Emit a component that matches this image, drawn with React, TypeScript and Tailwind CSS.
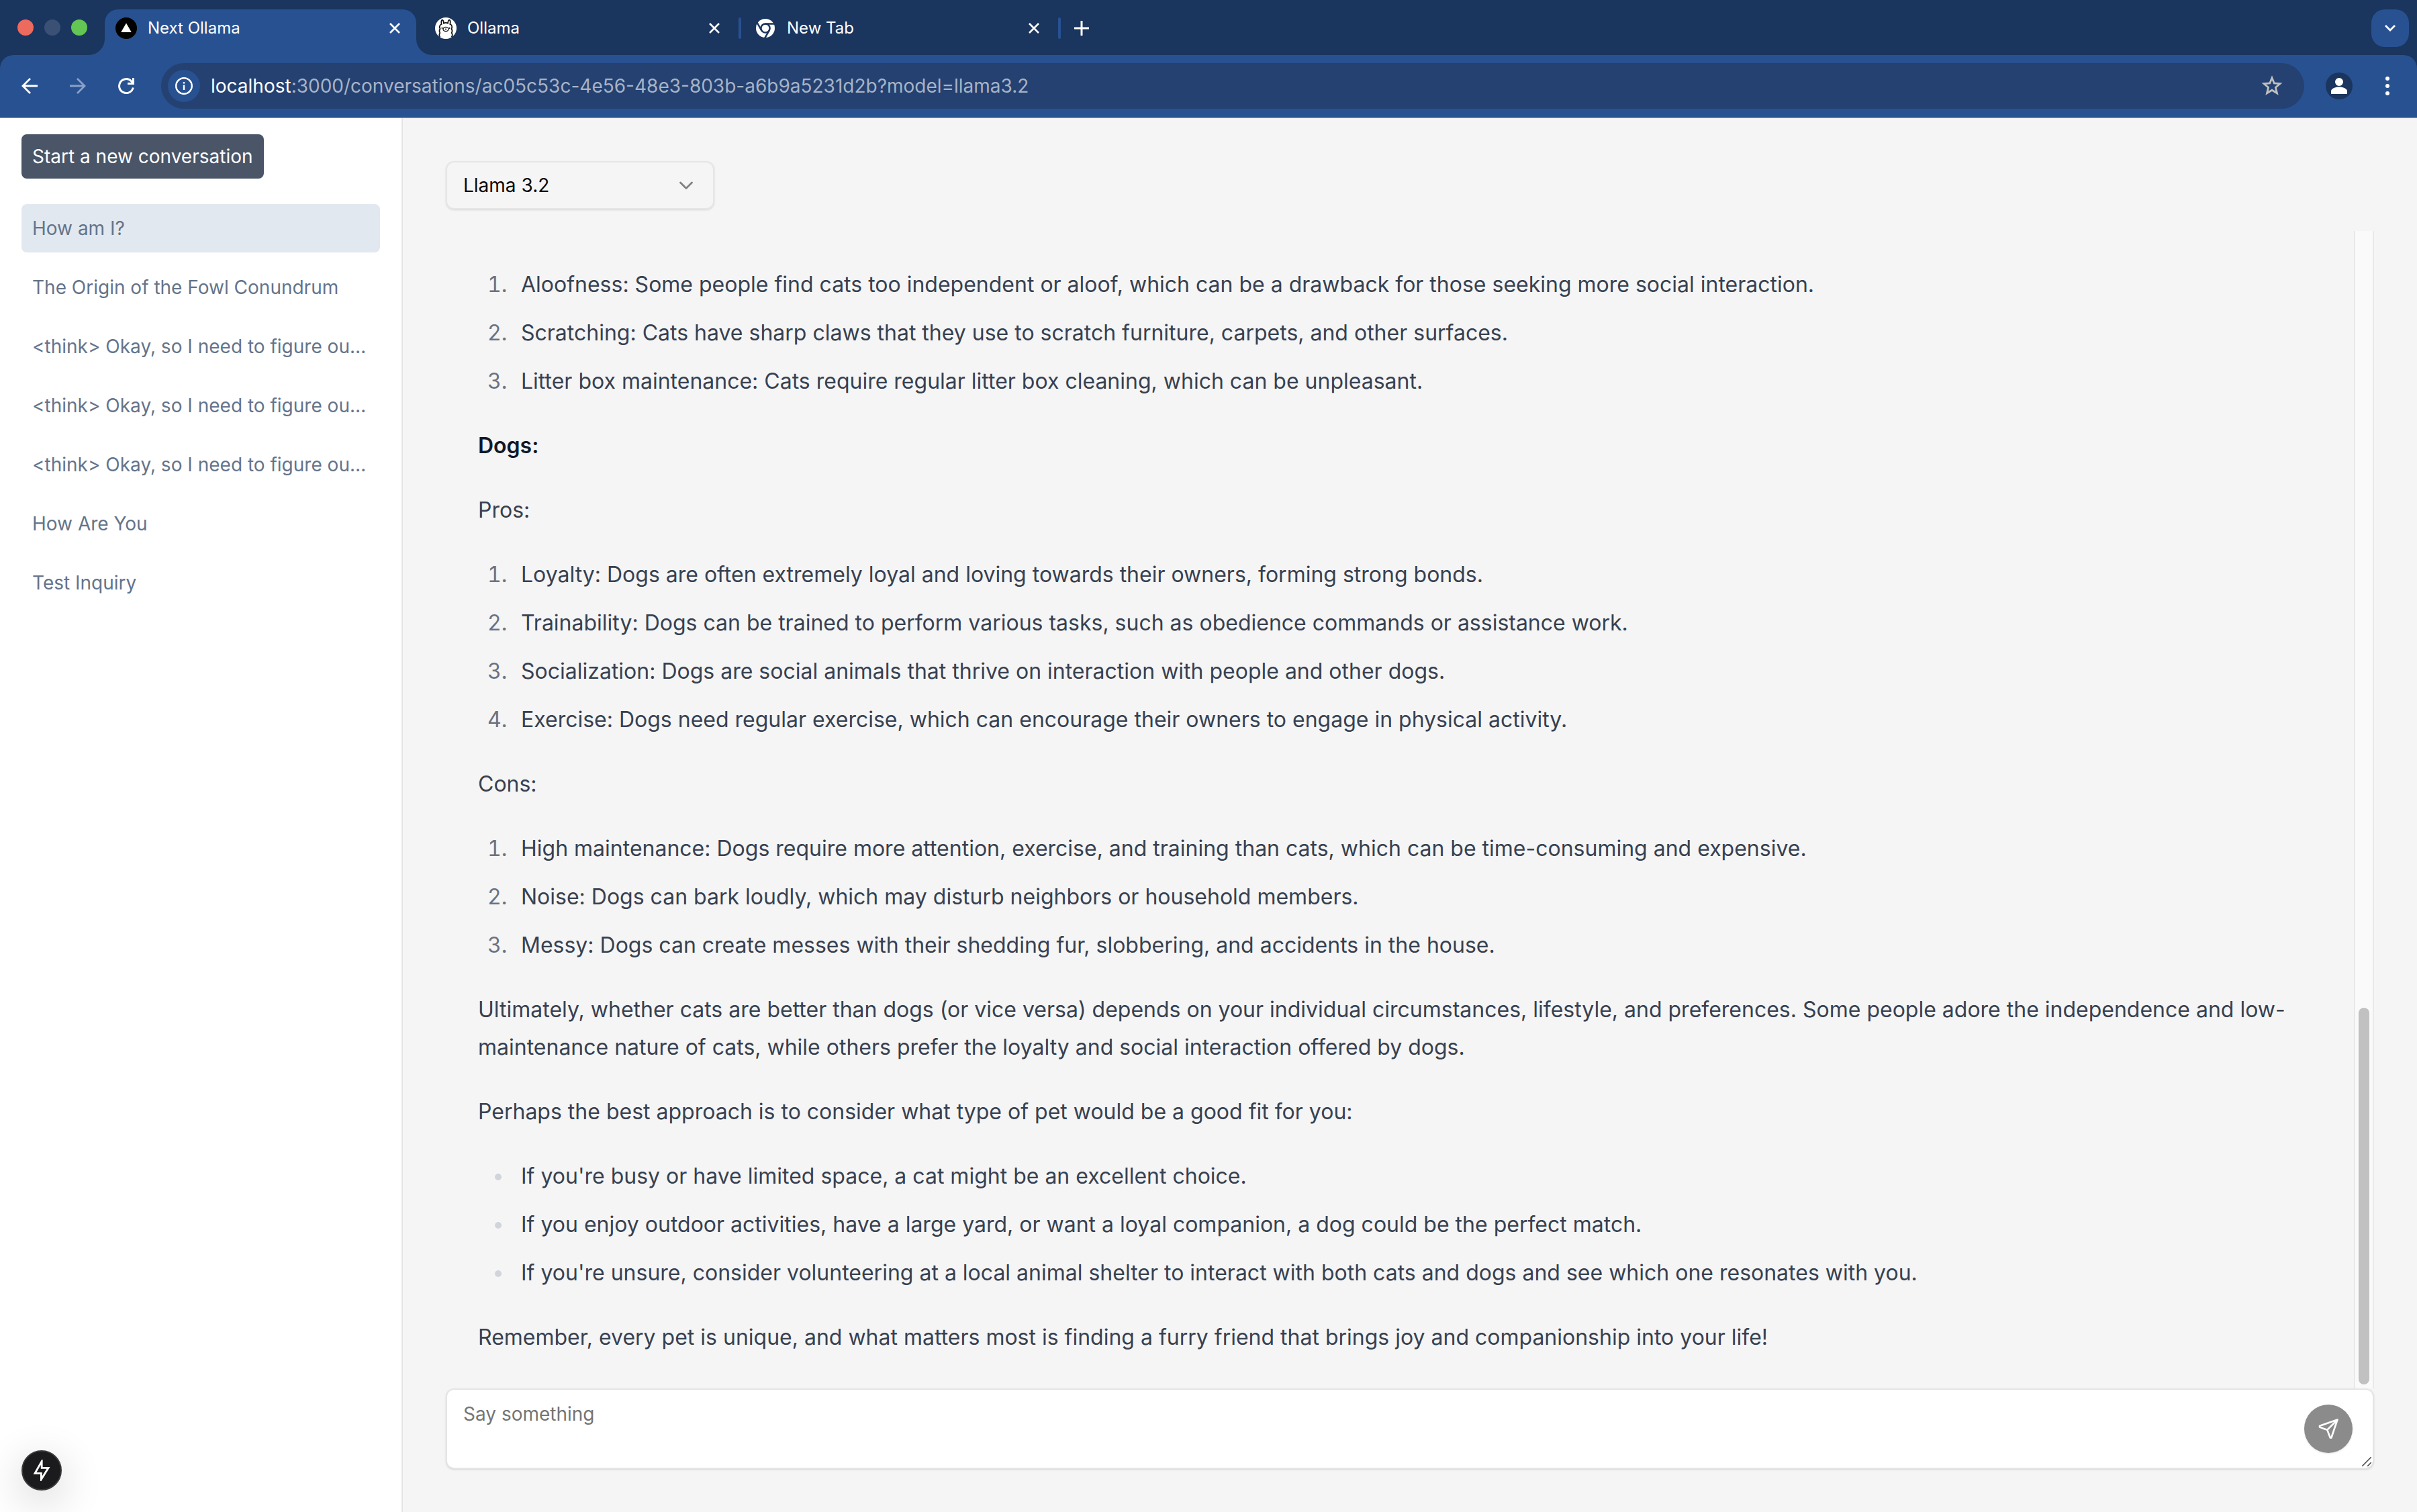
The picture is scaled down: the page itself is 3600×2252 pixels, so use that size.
import React from "react";

const conversations = [
  "How am I?",
  "The Origin of the Fowl Conundrum",
  "<think> Okay, so I need to figure ou…",
  "<think> Okay, so I need to figure ou…",
  "<think> Okay, so I need to figure ou…",
  "How Are You",
  "Test Inquiry",
];

function CloseIcon() {
  return (
    <svg viewBox="0 0 16 16" className="size-4" stroke="#fff" strokeWidth="2.6" fill="none">
      <path d="M1 1l14 14M15 1L1 15" />
    </svg>
  );
}

function OllamaIcon() {
  return (
    <svg viewBox="0 0 32 32" className="size-8" fill="none" stroke="#111" strokeWidth="1.7">
      <circle cx="16" cy="16" r="16" fill="#fff" stroke="none" />
      <path d="M7.500 29C5.700 27 6.300 24.500 7.300 23C6.100 20.500 6.300 18.500 7.500 17C5.900 14 6.900 11 9.700 10C8.800 7 9.300 3.800 10.800 3.600C12.400 3.800 12.700 6.200 13 8.700C14.800 7.600 17.200 7.600 19 8.700C19.300 6.200 19.600 3.800 21.200 3.600C22.700 3.800 23.200 7 22.300 10C25.100 11 26.100 14 24.500 17C25.700 18.500 25.900 20.500 24.700 23C25.700 24.500 26.300 27 24.500 29" />
      <ellipse cx="16" cy="17.500" rx="4" ry="3.100" strokeWidth="1.300" />
      <circle cx="10.500" cy="15.800" r="1.100" fill="#111" stroke="none" />
      <circle cx="21.500" cy="15.800" r="1.100" fill="#111" stroke="none" />
      <path d="M15 16.800l1 .7 1-.7M16 17.500v1.200" strokeWidth="1" />
    </svg>
  );
}

function ChromeIcon() {
  return (
    <svg viewBox="0 0 28 28" className="mx-0.5 size-7">
      <circle cx="14" cy="14" r="14" fill="#fff" />
      <g fill="none" stroke="#1a355e" strokeWidth="2.500">
        <circle cx="14" cy="14" r="6.600" />
        <path d="M14 7.400H27.500M8.300 17.300L1.500 5.500M19.700 17.300L13 29" />
      </g>
    </svg>
  );
}

function ActiveTab({ title, icon }: { title: string; icon: React.ReactNode }) {
  return (
    <div className="relative flex h-[68px] w-[464px] items-center rounded-t-[20px] bg-[#285192] pr-6 pl-4">
      <svg viewBox="0 0 24 24" className="absolute bottom-0 -left-6 size-6">
        <path d="M24 0V24H0A24 24 0 0 0 24 0Z" fill="#285192" />
      </svg>
      <svg viewBox="0 0 24 24" className="absolute -right-6 bottom-0 size-6">
        <path d="M0 0V24H24A24 24 0 0 1 0 0Z" fill="#285192" />
      </svg>
      <TabContent title={title} icon={icon} />
    </div>
  );
}

function TabContent({ title, icon }: { title: string; icon: React.ReactNode }) {
  return (
    <div className="-mt-3 flex flex-1 items-center">
      {icon}
      <span className="ml-4 flex-1 text-[24px] leading-8 text-white">{title}</span>
      <button aria-label={`Close ${title}`}>
        <CloseIcon />
      </button>
    </div>
  );
}

function Separator() {
  return <div className="-mt-3 h-8 w-1 shrink-0 rounded-full bg-[#285192]" />;
}

function Browser() {
  return (
    <header className="shrink-0 bg-[#1a355e]">
      <div className="flex h-[82px] items-end pr-3">
        <div className="flex h-[82px] w-[156px] shrink-0 items-center gap-4 pl-[26px]">
          <span className="size-6 rounded-full bg-[#ed6a5e]" />
          <span className="size-6 rounded-full bg-[#3a5075]" />
          <span className="size-6 rounded-full bg-[#62c554]" />
        </div>
        <ActiveTab
          title="Next Ollama"
          icon={
            <svg viewBox="0 0 32 32" className="size-8">
              <circle cx="16" cy="16" r="16" fill="#000" />
              <path d="M16 8.500l7.800 13.500H8.200Z" fill="#fff" />
            </svg>
          }
        />
        <div className="flex h-[68px] w-[480px] items-center px-7">
          <TabContent title="Ollama" icon={<OllamaIcon />} />
        </div>
        <div className="flex h-[68px] items-center">
          <Separator />
        </div>
        <div className="flex h-[68px] w-[472px] items-center pr-7 pl-5">
          <TabContent title="New Tab" icon={<ChromeIcon />} />
        </div>
        <div className="flex h-[68px] items-center">
          <Separator />
          <button aria-label="New tab" className="-mt-3 ml-5">
            <svg viewBox="0 0 22 22" className="size-[22px]" stroke="#fff" strokeWidth="3">
              <path d="M11 0V22M0 11H22" />
            </svg>
          </button>
        </div>
        <button aria-label="Search tabs" className="mb-3 ml-auto flex size-14 items-center justify-center rounded-[20px] bg-[#285192]">
          <svg viewBox="0 0 16 10" className="h-2.5 w-4" fill="none" stroke="#fff" strokeWidth="2.800">
            <path d="M1 1l7 7 7-7" />
          </svg>
        </button>
      </div>
      <div className="flex h-[94px] items-center rounded-t-[20px] border-b-2 border-[#5079b3] bg-[#285192] pl-8">
        <button aria-label="Back" className="mr-12">
          <svg viewBox="0 0 24 24" className="size-6" fill="none" stroke="#fff" strokeWidth="2.800">
            <path d="M24 12H2M13 1L2 12l11 11" />
          </svg>
        </button>
        <button aria-label="Forward" className="mr-12">
          <svg viewBox="0 0 24 24" className="size-6" fill="none" stroke="#8aa0c8" strokeWidth="2.800">
            <path d="M0 12H22M11 1l11 11-11 11" />
          </svg>
        </button>
        <button aria-label="Reload" className="mr-10">
          <svg viewBox="0 0 24 24" className="size-6" fill="none" stroke="#fff" strokeWidth="3">
            <path d="M22.300 14.500A10.500 10.500 0 1 1 19.500 4.700L22 7.500" />
            <path d="M22.500 0V8.600H14" />
          </svg>
        </button>
        <div className="flex h-[68px] flex-1 items-center rounded-full bg-[#244171] pr-8 pl-2.5">
          <button aria-label="Site information" className="flex size-12 items-center justify-center rounded-full bg-[#285192]">
            <svg viewBox="0 0 26 26" className="size-[26px]" fill="none" stroke="#fff" strokeWidth="2.400">
              <circle cx="13" cy="13" r="11.800" />
              <path d="M13 11.500V19M13 7V9.500" />
            </svg>
          </button>
          <a href="#" className="ml-4 flex-1 text-[28px] leading-10 text-[#a7b3c6]">
            <span className="text-white">localhost</span>
            :3000/conversations/ac05c53c-4e56-48e3-803b-a6b9a5231d2b?model=llama3.2
          </a>
          <button aria-label="Bookmark this page">
            <svg viewBox="0 0 32 32" className="size-8" fill="none" stroke="#c0c0c0" strokeWidth="2.800">
              <path d="M16 4l3.300 8 8.700.7-6.600 5.600 2.100 8.400L16 22.200l-7.500 4.500 2.100-8.400L4 12.700l8.700-.7Z" />
            </svg>
          </button>
        </div>
        <button aria-label="Profile" className="ml-8">
          <svg viewBox="0 0 40 40" className="size-10">
            <circle cx="20" cy="20" r="20" fill="#1a355e" />
            <circle cx="20" cy="14" r="6" fill="#fff" />
            <path d="M8 32V28C8 24 14 21.500 20 21.500S32 24 32 28V32Z" fill="#fff" />
          </svg>
        </button>
        <button aria-label="Menu" className="mr-7 ml-9">
          <svg viewBox="0 0 32 32" className="size-8" fill="#fff">
            <circle cx="16" cy="5" r="3" />
            <circle cx="16" cy="16" r="3" />
            <circle cx="16" cy="27" r="3" />
          </svg>
        </button>
      </div>
    </header>
  );
}

function Sidebar() {
  return (
    <aside className="relative flex w-[600px] shrink-0 flex-col border-r-2 border-[#e5e5e5] bg-white px-8 pt-6">
      <button className="mb-[38px] h-[66px] self-start rounded-lg bg-[#4a5568] px-4 text-[28px] leading-10 text-white">
        Start a new conversation
      </button>
      <nav className="flex flex-col gap-4">
        {conversations.map((title, i) => (
          <a
            key={i}
            href="#"
            className={
              i === 0
                ? "rounded-lg bg-[#e2e8f0] p-4 text-[28px] leading-10 text-[#64748b]"
                : "rounded-lg p-4 text-[28px] leading-10 text-[#64748b]"
            }
          >
            {title}
          </a>
        ))}
      </nav>
      <button
        aria-label="Developer tools"
        className="absolute bottom-8 left-8 flex size-[60px] items-center justify-center rounded-full border-2 border-[#3a3a3a] bg-[#1b1b1d] shadow-[0_16px_64px_rgba(0,0,0,0.2)]"
      >
        <svg viewBox="0 0 26 32" className="h-8 w-[26px]" fill="none" stroke="#fff" strokeWidth="2.800">
          <path d="M13.200 2.500V12.300H23L12.400 29.500V20.300H3Z" />
        </svg>
      </button>
    </aside>
  );
}

function Numbered({ items }: { items: string[] }) {
  return (
    <ol className="my-10 list-decimal space-y-4 pl-[52px] marker:text-[#6b7280]">
      {items.map((t) => (
        <li key={t} className="pl-3">
          {t}
        </li>
      ))}
    </ol>
  );
}

function Message() {
  return (
    <article className="px-12 pt-3 pb-12 text-[32px] leading-[56px] text-[#374151]">
      <Numbered
        items={[
          "Aloofness: Some people find cats too independent or aloof, which can be a drawback for those seeking more social interaction.",
          "Scratching: Cats have sharp claws that they use to scratch furniture, carpets, and other surfaces.",
          "Litter box maintenance: Cats require regular litter box cleaning, which can be unpleasant.",
        ]}
      />
      <p className="my-10">
        <strong className="font-semibold text-[#111827]">Dogs:</strong>
      </p>
      <p className="my-10">Pros:</p>
      <Numbered
        items={[
          "Loyalty: Dogs are often extremely loyal and loving towards their owners, forming strong bonds.",
          "Trainability: Dogs can be trained to perform various tasks, such as obedience commands or assistance work.",
          "Socialization: Dogs are social animals that thrive on interaction with people and other dogs.",
          "Exercise: Dogs need regular exercise, which can encourage their owners to engage in physical activity.",
        ]}
      />
      <p className="my-10">Cons:</p>
      <Numbered
        items={[
          "High maintenance: Dogs require more attention, exercise, and training than cats, which can be time-consuming and expensive.",
          "Noise: Dogs can bark loudly, which may disturb neighbors or household members.",
          "Messy: Dogs can create messes with their shedding fur, slobbering, and accidents in the house.",
        ]}
      />
      <p className="my-10">
        Ultimately, whether cats are better than dogs (or vice versa) depends on your individual circumstances, lifestyle,
        and preferences. Some people adore the independence and low-maintenance nature of cats, while others prefer the
        loyalty and social interaction offered by dogs.
      </p>
      <p className="my-10">Perhaps the best approach is to consider what type of pet would be a good fit for you:</p>
      <ul className="my-10 list-disc space-y-4 pl-[52px] marker:text-[#d1d5db]">
        <li className="pl-3">If you're busy or have limited space, a cat might be an excellent choice.</li>
        <li className="pl-3">
          If you enjoy outdoor activities, have a large yard, or want a loyal companion, a dog could be the perfect match.
        </li>
        <li className="pl-3">
          If you're unsure, consider volunteering at a local animal shelter to interact with both cats and dogs and see
          which one resonates with you.
        </li>
      </ul>
      <p>
        Remember, every pet is unique, and what matters most is finding a furry friend that brings joy and companionship
        into your life!
      </p>
    </article>
  );
}

export default function App() {
  return (
    <div className="flex min-h-screen flex-col bg-[#f5f5f5] font-['Inter',sans-serif]">
      <Browser />
      <div className="flex flex-1">
        <Sidebar />
        <main className="flex min-w-0 flex-1 flex-col p-16">
          <div className="relative mb-8 w-[400px]">
            <select
              aria-label="Model"
              className="h-[72px] w-full appearance-none rounded-xl border-2 border-[#e5e5e5] bg-transparent px-6 text-[28px] leading-10 text-[#0a0a0a] shadow-sm"
            >
              <option>Llama 3.2</option>
            </select>
            <svg viewBox="0 0 32 32" className="pointer-events-none absolute top-5 right-[26px] size-8" fill="none" stroke="#818181" strokeWidth="2.800" strokeLinecap="round" strokeLinejoin="round">
              <path d="M7.500 12l8.500 8.500L24.500 12" />
            </svg>
          </div>
          <section className="flex flex-1">
            <div className="flex flex-1 flex-col justify-end">
              <Message />
            </div>
            <div className="flex w-[30px] shrink-0 flex-col justify-end border-x-2 border-[#e9e9e9] bg-[#fafafa] px-[5px] pb-1.5">
              <div className="h-[561px] rounded-full bg-[#c1c1c1]" />
            </div>
          </section>
          <form className="relative">
            <textarea
              aria-label="Message"
              placeholder="Say something"
              className="block h-[120px] w-full resize-none rounded-xl border-2 border-[#e5e5e5] bg-white px-6 py-4 text-[28px] leading-10 shadow-sm placeholder:text-[#757575]"
            />
            <button
              type="button"
              aria-label="Send"
              className="absolute top-6 right-8 flex size-[72px] items-center justify-center rounded-full bg-[#8b8b8b] shadow-sm"
            >
              <svg viewBox="0 0 30 30" className="size-[30px]" fill="none" stroke="#fff" strokeWidth="2.600" strokeLinejoin="round">
                <path d="M28.500 1.500L2 10.800V12.600L13.300 16.700L17.800 28.500H19.400Z" />
                <path d="M28.500 1.500L13.300 16.700" />
              </svg>
            </button>
            <svg viewBox="0 0 14 14" className="pointer-events-none absolute right-1 bottom-1 size-3.5" stroke="#444" strokeWidth="1.500">
              <path d="M0 14L14 0M8 14l6-6" />
            </svg>
          </form>
        </main>
      </div>
    </div>
  );
}
